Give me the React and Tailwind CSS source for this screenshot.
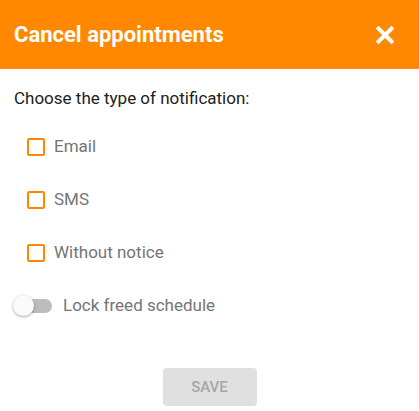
import React, { useState } from 'react';

const options = ['Email', 'SMS', 'Without notice'];

const App = () => {
    const [checked, setChecked] = useState({});
    const [locked, setLocked] = useState(false);

    return (
        <div className="w-[419px] h-[411px] bg-white font-['Roboto',sans-serif]">
            {/* Header */}
            <div className="h-[69px] bg-[#ff8800] flex items-center justify-between pl-[14px] pr-[25px]">
                <h1 className="text-white text-[22px] font-bold">Cancel appointments</h1>
                <button className="text-white">
                    <svg width="18" height="18" viewBox="0 0 18 18">
                        <path d="M2.5 2.5 L15.5 15.5 M15.5 2.5 L2.5 15.5" stroke="white" strokeWidth="4" strokeLinecap="square" />
                    </svg>
                </button>
            </div>

            {/* Body */}
            <div className="px-[14px]">
                <p className="mt-[17px] text-[17px] leading-[24px] text-[#212121]">Choose the type of notification:</p>
                <div className="mt-[10px]">
                    {options.map((opt) => (
                        <label key={opt} className="h-[53px] flex items-center cursor-pointer">
                            <span
                                onClick={() => setChecked({ ...checked, [opt]: !checked[opt] })}
                                className={`ml-[13px] w-[18px] h-[18px] border-2 border-[#ff8800] rounded-[2px] ${checked[opt] ? 'bg-[#ff8800]' : 'bg-white'}`}
                            />
                            <span className="ml-[9px] text-[17px] text-[#757575]">{opt}</span>
                        </label>
                    ))}
                    <div className="h-[53px] flex items-center">
                        <div className="relative w-[38px] h-[21px]" onClick={() => setLocked(!locked)}>
                            <div className="absolute left-[2px] top-[4px] w-[36px] h-[14px] rounded-full bg-[#bdbdbd]" />
                            <div className="absolute -left-[1px] top-0 w-[21px] h-[21px] rounded-full bg-[#fafafa] shadow-[0_1px_3px_rgba(0,0,0,0.35)]" />
                        </div>
                        <span className="ml-[11px] text-[17px] text-[#757575]">Lock freed schedule</span>
                    </div>
                </div>
                <div className="flex justify-center mt-[36px]">
                    <button className="w-[94px] h-[38px] rounded-[4px] bg-[#e0e0e0] text-[#a6a6a6] text-[15px] font-medium uppercase">Save</button>
                </div>
            </div>
        </div>
    );
};

export default App;
